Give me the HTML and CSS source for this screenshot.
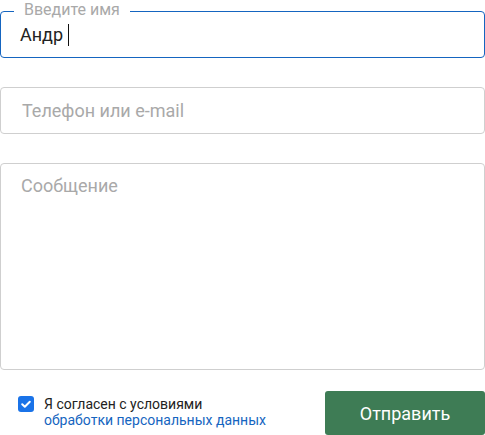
FILE: index.html
```html
<!DOCTYPE html>
<html lang="ru">
<head>
<meta charset="utf-8">
<link rel="stylesheet" href="styles.css">
</head>
<body>
<form class="form">
  <div class="field field--active">
    <span class="field__label">Введите имя</span>
    <div class="field__box field__box--focus"><span class="field__value">Андр</span><span class="caret"></span></div>
  </div>
  <div class="field">
    <div class="field__box"><span class="field__placeholder">Телефон или e-mail</span></div>
  </div>
  <div class="field">
    <div class="field__box field__box--area"><span class="field__placeholder">Сообщение</span></div>
  </div>
  <div class="footer">
    <label class="agree">
      <span class="check"><svg viewBox="0 0 16 16" width="16" height="16"><path d="M4.2 8.2l2.6 2.5 5-5" fill="none" stroke="#fff" stroke-width="2" stroke-linecap="round" stroke-linejoin="round"/></svg></span>
      <span class="agree__text">Я согласен с условиями<br><span class="agree__link">обработки персональных данных</span></span>
    </label>
    <button type="button" class="submit">Отправить</button>
  </div>
</form>
</body>
</html>
```
FILE: styles.css
```css
* { box-sizing: border-box; }
html, body { margin: 0; padding: 0; background: #fff; }
body { font-family: Roboto, "Noto Sans", sans-serif; width: 485px; }
.form { display: flex; flex-direction: column; gap: 29px; padding-top: 11px; }
.field { position: relative; }
.field__label {
  position: absolute; top: -11px; left: 14px; padding: 0 10px;
  background: #fff; color: #a9a9a9; font-size: 16px; line-height: 20px;
}
.field__box {
  height: 47px; border: 1px solid #cfcfcf; border-radius: 4px;
  padding: 0 21px; display: flex; align-items: center;
  font-size: 18px;
}
.field__box--focus { border-color: #1565c0; padding-left: 19px; }
.field__box--area { height: 207px; align-items: flex-start; padding: 11px 20px 0; }
.field__value { color: #222; }
.caret { display: inline-block; width: 1px; height: 22px; background: #111; margin-left: 5px; }
.field__placeholder { color: #a9a9a9; }
.footer { display: flex; justify-content: space-between; align-items: flex-start; margin-top: -8px; }
.agree { display: flex; align-items: flex-start; gap: 10px; padding: 5px 0 0 18px; font-size: 14px; line-height: 16px; color: #222; }
.check { width: 16px; height: 16px; border-radius: 3px; background: #1a73e8; display: flex; flex: none; }
.agree__link { color: #1565c0; }
.submit {
  width: 160px; height: 44px; border: 0; border-radius: 3px;
  background: #3e7c55; color: #fff; font-family: Roboto, sans-serif; font-size: 18px;
}
```
